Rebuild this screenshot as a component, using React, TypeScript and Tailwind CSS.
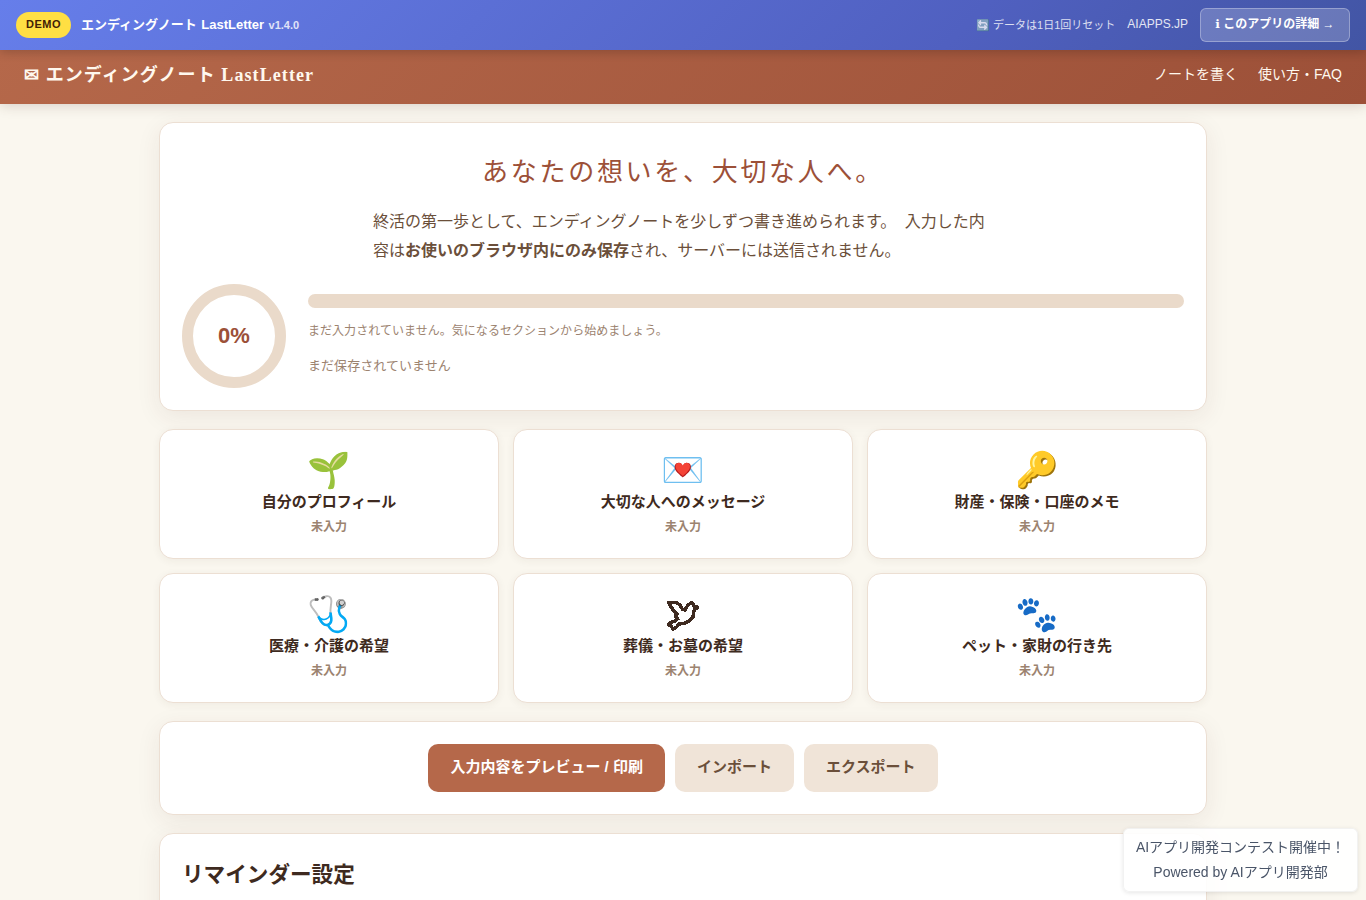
type Section = {
  icon: string;
  title: string;
};

const sections: Section[] = [
  { icon: "🌱", title: "自分のプロフィール" },
  { icon: "💌", title: "大切な人へのメッセージ" },
  { icon: "🔑", title: "財産・保険・口座のメモ" },
  { icon: "🩺", title: "医療・介護の希望" },
  { icon: "dove", title: "葬儀・お墓の希望" },
  { icon: "🐾", title: "ペット・家財の行き先" },
];

function DoveIcon() {
  return (
    <svg viewBox="0 0 32 30" className="w-8 h-[30px] mx-auto mt-[7px]" fill="none" stroke="currentColor" strokeWidth="3.4" strokeLinejoin="miter" shapeRendering="crispEdges">
      <path d="M1.5 1.5H9L13 4L15.5 8.5L18 9L21 4L25 1.5L27 5L31 6.5L28 8L26.5 11L26 16L22 20L17 22.5L12 23L9.5 26L6 28L4.5 25.5L1.5 23.5L3 21.5L8 20L10.5 18L8.5 15L10 13L7 10L4 6Z" />
    </svg>
  );
}

function DemoBar() {
  return (
    <div className="relative z-20 h-[50px] px-4 flex items-center justify-between bg-[linear-gradient(135deg,#667eea_0%,#5060c0_70%,#4255a4_100%)] text-white shadow-[0_2px_10px_rgba(0,0,0,0.2)]">
      <div className="flex items-center gap-2.5">
        <span className="h-[26px] px-2.5 rounded-full bg-[#ffdf43] text-[#422006] text-[11px] leading-[25px] font-bold tracking-[0.5px]">DEMO</span>
        <p className="text-[13px] leading-5 font-bold [word-spacing:0.8px]">
          エンディングノート LastLetter <span className="text-[11px] opacity-80">v1.4.0</span>
        </p>
      </div>
      <div className="flex items-center gap-3">
        <span className="text-[11px] leading-4 opacity-80">🔄 データは1日1回リセット</span>
        <a href="#" className="pb-0.5 text-xs leading-4 opacity-85">AIAPPS.JP</a>
        <a href="#" className="h-[34px] w-[150px] pb-0.5 flex items-center justify-center rounded-md border border-white/30 bg-white/20 text-xs font-bold whitespace-pre"><span className="font-['DejaVu_Sans',sans-serif]">ℹ</span> このアプリの詳細 →</a>
      </div>
    </div>
  );
}

function Header() {
  return (
    <header className="relative z-10 h-[54px] px-6 pb-1.5 flex items-center justify-between bg-[linear-gradient(135deg,#b5684a,#9c5038)] text-[#fff8ee] shadow-[0_2px_12px_rgba(74,44,32,0.18)]">
      <h1 className="pt-px font-['Liberation_Serif','Noto_Sans_CJK_JP',serif] text-[18px] leading-7 font-bold tracking-[1.08px]">✉ エンディングノート LastLetter</h1>
      <nav className="flex gap-5 text-sm leading-6">
        <a href="#">ノートを書く</a>
        <a href="#">使い方・FAQ</a>
      </nav>
    </header>
  );
}

function Hero() {
  return (
    <section className="h-[289px] p-[22px] rounded-[14px] border border-[#ecdfd3] bg-white shadow-[0_6px_24px_rgba(74,44,32,0.08)]">
      <h2 className="h-[63px] pt-[7px] text-center text-[26px] leading-10 tracking-[2.7px] text-[#9c5038]">あなたの想いを、大切な人へ。</h2>
      <p className="w-[620px] mx-auto text-base leading-[28.8px] [word-spacing:4px] text-[#6b4f3a]">
        終活の第一歩として、エンディングノートを少しずつ書き進められます。 入力した内容は<strong>お使いのブラウザ内にのみ保存</strong>され、サーバーには送信されません。
      </p>
      <div className="mt-[18px] flex gap-[22px]">
        <div className="size-[104px] shrink-0 rounded-full border-[11px] border-[#eadaca] flex items-center justify-center text-[22px] font-bold text-[#9c5038]">0%</div>
        <div className="grow pt-2.5 text-[#9c8370]">
          <div className="h-3.5 rounded-full bg-[#eadaca]"></div>
          <p className="mt-[13px] text-xs leading-5 tracking-[0.04px]">まだ入力されていません。気になるセクションから始めましょう。</p>
          <p className="mt-[15px] text-[13px] leading-5 tracking-[0.06px]">まだ保存されていません</p>
        </div>
      </div>
    </section>
  );
}

function SectionCard({ icon, title }: Section) {
  return (
    <a href="#" className="h-[130px] pt-5 rounded-[14px] border border-[#ecdfd3] bg-white text-center shadow-[0_2px_8px_rgba(74,44,32,0.06)]">
      <div className="h-10 flow-root text-[35px] leading-10 text-[#3e2a20]">{icon === "dove" ? <DoveIcon /> : icon}</div>
      <h3 className="text-[15px] leading-6 font-bold text-[#3e2a20]">{title}</h3>
      <p className="pt-px text-xs leading-6 font-bold text-[#9c8370]">未入力</p>
    </a>
  );
}

export default function App() {
  return (
    <div className="h-[900px] overflow-hidden bg-[#faf7ef] font-['Liberation_Sans','Noto_Sans_CJK_JP',sans-serif]">
      <DemoBar />
      <Header />
      <main className="w-[1048px] mx-auto pt-[18px] flex flex-col gap-[18px]">
        <Hero />
        <div className="grid grid-cols-3 gap-3.5">
          {sections.map((section) => (
            <SectionCard key={section.title} {...section} />
          ))}
        </div>
        <section className="h-[94px] py-[22px] flex justify-center gap-2.5 rounded-[14px] border border-[#ecdfd3] bg-white text-[15px] font-bold shadow-[0_6px_24px_rgba(74,44,32,0.08)]">
          <button className="h-12 px-[22px] pb-0.5 rounded-[10px] bg-[#b5684a] text-white">入力内容をプレビュー / 印刷</button>
          <button className="h-12 px-[22px] pb-0.5 rounded-[10px] bg-[#f0e4d8] text-[#6b4f3a]">インポート</button>
          <button className="h-12 px-[22px] pb-0.5 rounded-[10px] bg-[#f0e4d8] text-[#6b4f3a]">エクスポート</button>
        </section>
        <section className="h-[300px] px-[22px] pt-[23px] rounded-[14px] border border-[#ecdfd3] bg-white shadow-[0_6px_24px_rgba(74,44,32,0.08)]">
          <h2 className="text-[21.6px] leading-9 font-bold text-[#3e2a20]">リマインダー設定</h2>
        </section>
      </main>
      <aside className="fixed z-30 right-2 bottom-2 w-[235px] h-16 pt-1.5 rounded-md border border-black/5 bg-white/90 text-center text-sm leading-[25px] text-[#4a5568] shadow-[0_1px_4px_rgba(0,0,0,0.1)]">
        <p>AIアプリ開発コンテスト開催中！</p>
        <p>Powered by AIアプリ開発部</p>
      </aside>
    </div>
  );
}
